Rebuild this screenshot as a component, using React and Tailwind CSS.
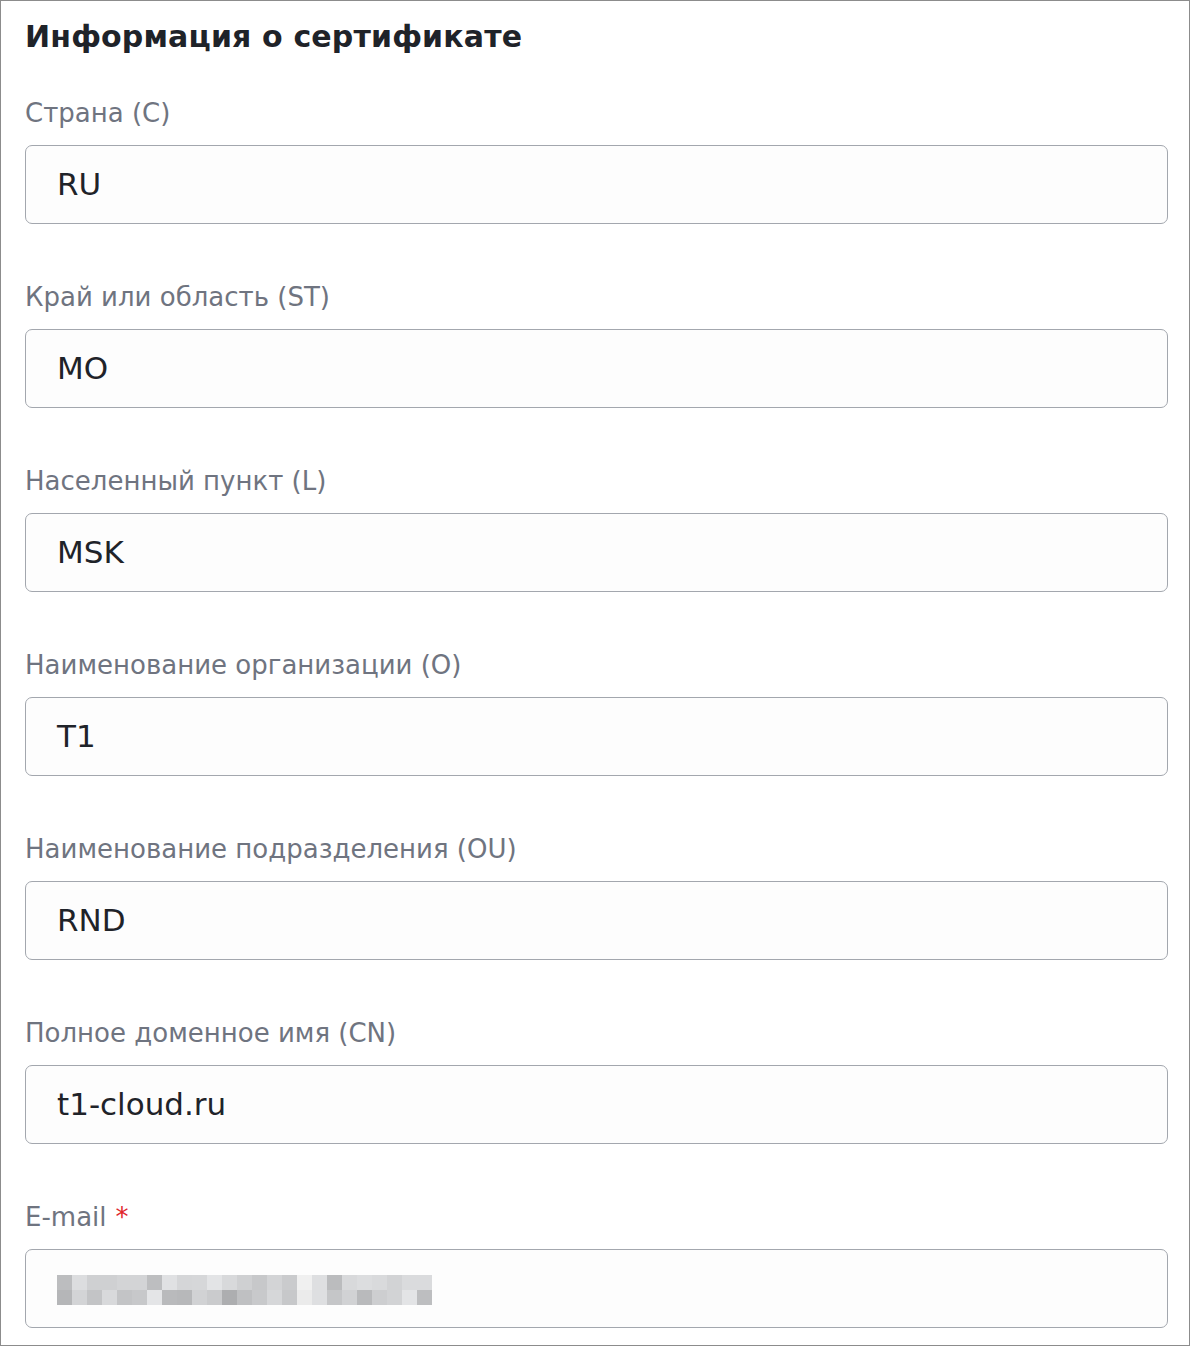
import React from "react";

const fields = [
  { label: "Страна (C)", value: "RU" },
  { label: "Край или область (ST)", value: "MO" },
  { label: "Населенный пункт (L)", value: "MSK" },
  { label: "Наименование организации (O)", value: "T1" },
  { label: "Наименование подразделения (OU)", value: "RND" },
  { label: "Полное доменное имя (CN)", value: "t1-cloud.ru" },
];

// blurred e-mail, two rows of mosaic blocks
const blurTop = [
  "bg-[#bcbdbf]", "bg-[#dcdddf]", "bg-[#cfd0d2]", "bg-[#cfd0d2]", "bg-[#d3d4d6]",
  "bg-[#d3d4d6]", "bg-[#bdbec0]", "bg-[#e0e1e3]", "bg-[#d5d6d8]", "bg-[#d6d7d9]",
  "bg-[#e3e4e6]", "bg-[#d8d9db]", "bg-[#cfd0d2]", "bg-[#c7c8ca]", "bg-[#d3d4d6]",
  "bg-[#cacbcd]", "bg-[#f0f0f0]", "bg-[#dedfe1]", "bg-[#bbbcbe]", "bg-[#d8d9db]",
  "bg-[#dcdddf]", "bg-[#d9dadc]", "bg-[#d2d3d5]", "bg-[#dadbdd]", "bg-[#dadbdd]",
];
const blurBottom = [
  "bg-[#b5b6b8]", "bg-[#d3d4d6]", "bg-[#c3c4c6]", "bg-[#d8d9db]", "bg-[#c3c4c6]",
  "bg-[#c7c8ca]", "bg-[#e4e5e7]", "bg-[#b9babc]", "bg-[#b7b8ba]", "bg-[#d1d2d4]",
  "bg-[#cacbcd]", "bg-[#adaeb0]", "bg-[#bfc0c2]", "bg-[#c8c9cb]", "bg-[#d6d7d9]",
  "bg-[#c7c8ca]", "bg-[#ebebeb]", "bg-[#dedfe1]", "bg-[#c5c6c8]", "bg-[#d1d2d4]",
  "bg-[#b9babc]", "bg-[#cdced0]", "bg-[#d2d3d5]", "bg-[#e3e4e6]", "bg-[#bdbec0]",
];

function Field({ label, required, children }) {
  return (
    <div className="flex flex-col">
      <div className="h-[32px] flex items-center text-[26px] text-[#6f7480] leading-none">
        {label}
        {required && <span className="ml-[9px] text-[#e0262b]">*</span>}
      </div>
      <div className="mt-[16px] h-[79px] rounded-[7px] border-[1.5px] border-[#a3a7ae] bg-[#fdfdfd] flex items-center pl-[31px] text-[31px] text-[#1f2329]">
        {children}
      </div>
    </div>
  );
}

export default function App() {
  return (
    <div className="w-[1190px] h-[1346px] bg-white border border-[#8c8c8c] pl-[24px] pr-[21px] pt-[14px] font-['DejaVu_Sans',sans-serif]">
      <h1 className="text-[30px] leading-[44px] font-bold tracking-[0.15px] text-[#1f2329]">Информация о сертификате</h1>
      <div className="mt-[38px] flex flex-col gap-[57px]">
        {fields.map((f) => (
          <Field key={f.label} label={f.label}>
            {f.value}
          </Field>
        ))}
        <Field label="E-mail" required>
          <div className="mt-[2px] flex flex-col">
            <div className="flex">
              {blurTop.map((c, i) => (
                <div key={i} className={"w-[15px] h-[15px] " + c} />
              ))}
            </div>
            <div className="flex">
              {blurBottom.map((c, i) => (
                <div key={i} className={"w-[15px] h-[15px] " + c} />
              ))}
            </div>
          </div>
        </Field>
      </div>
    </div>
  );
}
